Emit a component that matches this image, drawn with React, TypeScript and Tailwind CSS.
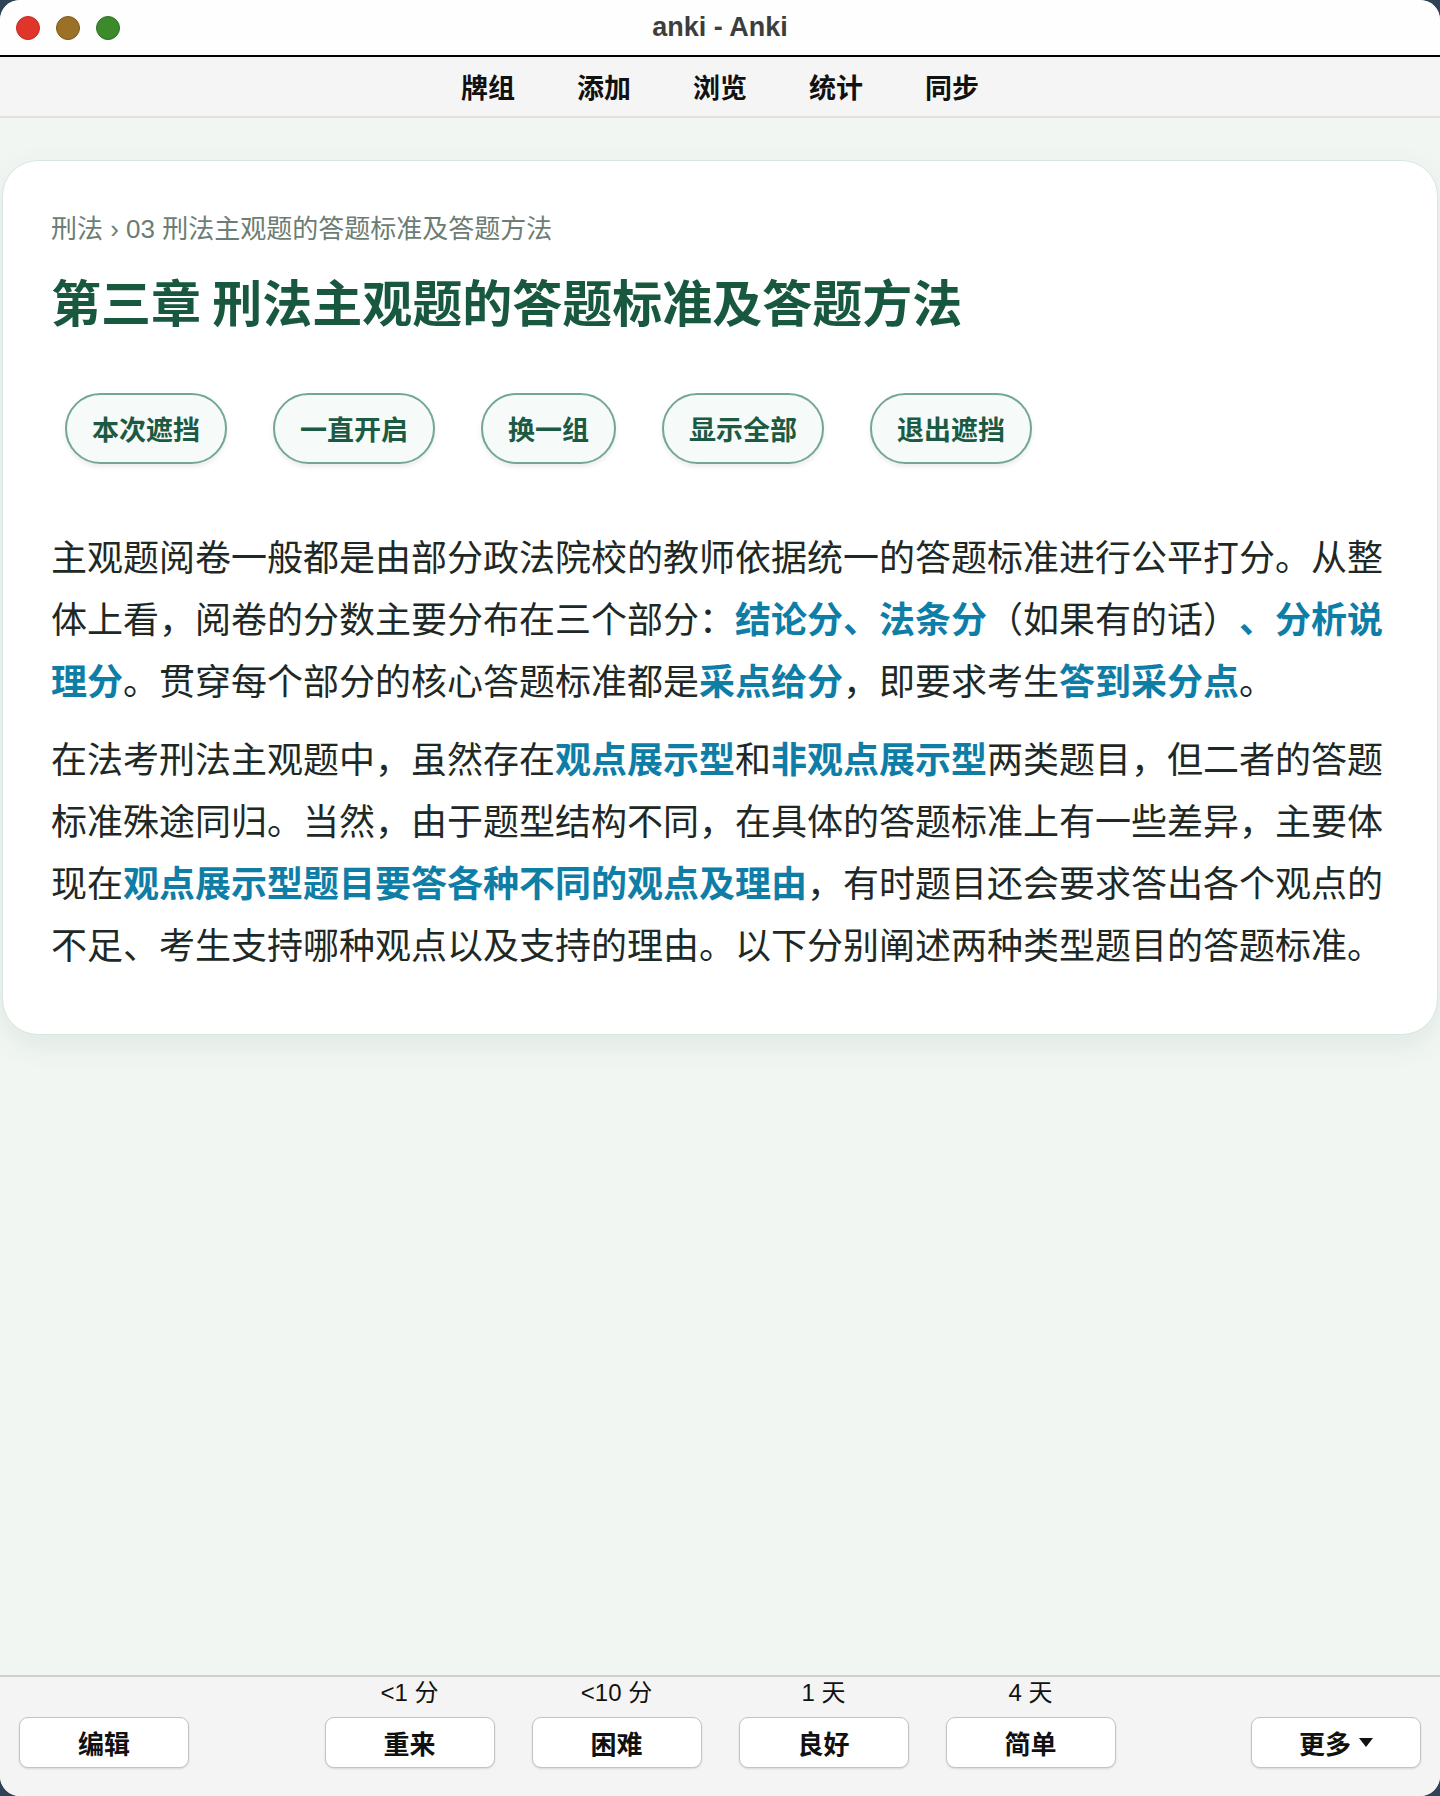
import React from "react";

const CJK = { fontFamily: '"Noto Sans CJK SC", "Noto Sans", sans-serif' };
const UI = { fontFamily: '"Liberation Sans", "Noto Sans CJK SC", sans-serif' };

function B({ children }: { children: React.ReactNode }) {
  return <span className="font-bold text-[#0f7ea7]">{children}</span>;
}

function Pill({ label }: { label: string }) {
  return (
    <button className="h-[71px] px-[25px] rounded-full border-2 border-[#73a790] bg-[#f6fbf9] text-[27px] font-bold text-[#1c5a43] leading-none shadow-[0_3px_5px_rgba(0,0,0,0.08)]">
      {label}
    </button>
  );
}

function BarButton({ children }: { children: React.ReactNode }) {
  return (
    <button className="w-[170px] h-[51px] bg-white border border-[#c3c3c3] rounded-[9px] shadow-[0_1px_2px_rgba(0,0,0,0.12)] text-[26px] font-bold text-[#111] flex items-center justify-center gap-[8px] leading-none">
      {children}
    </button>
  );
}

function Answer({ label, text }: { label: string; text: string }) {
  return (
    <div className="flex flex-col items-center">
      <div className="h-[30px] text-[24px] leading-[30px] text-[#111]" style={UI}>
        {label}
      </div>
      <div className="mt-[9px]">
        <BarButton>{text}</BarButton>
      </div>
    </div>
  );
}

export default function App() {
  return (
    <div className="w-[1440px] h-[1796px] bg-[#2f4257]" style={CJK}>
      <div className="w-full h-full rounded-[20px] overflow-hidden flex flex-col bg-[#f1f6f3]">
        {/* Title bar */}
        <div className="relative h-[55px] bg-[#fefefe] flex items-center justify-center shrink-0">
          <div className="absolute left-[16px] top-[16px] flex gap-[16px]">
            <span className="w-[24px] h-[24px] rounded-full bg-[#e0352b] border border-[#c22a20]" />
            <span className="w-[24px] h-[24px] rounded-full bg-[#9b7128] border border-[#7d5a1c]" />
            <span className="w-[24px] h-[24px] rounded-full bg-[#3b8a2b] border border-[#2e6f21]" />
          </div>
          <span className="text-[27px] font-bold text-[#3d3d3d]" style={UI}>
            anki - Anki
          </span>
        </div>
        <div className="h-[2px] bg-black shrink-0" />
        {/* Toolbar */}
        <div className="h-[61px] bg-[#f5f5f5] border-b-2 border-[#e2e2e2] flex items-center justify-center shrink-0">
          {["牌组", "添加", "浏览", "统计", "同步"].map((t) => (
            <div key={t} className="w-[116px] text-center text-[27px] font-bold text-[#111] leading-none">
              {t}
            </div>
          ))}
        </div>

        {/* Main */}
        <div className="flex-1 px-[2px] pt-[42px]">
          <div className="bg-white rounded-[36px] border border-[#d6e7de] shadow-[0_10px_30px_rgba(30,80,55,0.08)] px-[48px] pt-[48px] pb-[60px] [text-spacing-trim:space-all]">
            <div className="text-[26px] leading-[40px] text-[#6b7d74]" style={UI}>
              刑法 › 03 刑法主观题的答题标准及答题方法
            </div>
            <h1 className="mt-[19px] text-[50px] leading-[64px] font-bold text-[#17583f]">
              第三章 刑法主观题的答题标准及答题方法
            </h1>
            <div className="mt-[61px] ml-[14px] flex gap-[46px]">
              <Pill label="本次遮挡" />
              <Pill label="一直开启" />
              <Pill label="换一组" />
              <Pill label="显示全部" />
              <Pill label="退出遮挡" />
            </div>
            <p className="mt-[60px] text-[36px] leading-[62px] text-[#1e2925]">
              主观题阅卷一般都是由部分政法院校的教师依据统一的答题标准进行公平打分。从整体上看，阅卷的分数主要分布在三个部分：
              <B>结论分、法条分</B>（如果有的话）<B>、分析说理分</B>。贯穿每个部分的核心答题标准都是<B>采点给分</B>，即要求考生<B>答到采分点</B>。
            </p>
            <p className="mt-[16px] text-[36px] leading-[62px] text-[#1e2925]">
              在法考刑法主观题中，虽然存在<B>观点展示型</B>和<B>非观点展示型</B>两类题目，但二者的答题标准殊途同归。当然，由于题型结构不同，在具体的答题标准上有一些差异，主要体现在<B>观点展示型题目要答各种不同的观点及理由</B>，有时题目还会要求答出各个观点的不足、考生支持哪种观点以及支持的理由。以下分别阐述两种类型题目的答题标准。
            </p>
          </div>
        </div>

        {/* Bottom bar */}
        <div className="h-[121px] shrink-0 bg-[#f4f4f4] border-t-2 border-[#cecece] px-[19px] pt-[1px] grid grid-cols-[1fr_auto_1fr]">
          <div className="flex items-start pt-[39px]">
            <BarButton>编辑</BarButton>
          </div>
          <div className="flex gap-[37px]">
            <Answer label="<1 分" text="重来" />
            <Answer label="<10 分" text="困难" />
            <Answer label="1 天" text="良好" />
            <Answer label="4 天" text="简单" />
          </div>
          <div className="flex items-start justify-end pt-[39px]">
            <BarButton>
              <span>更多</span>
              <svg width="14" height="9" viewBox="0 0 14 9">
                <path d="M0 0 L14 0 L7 9 Z" fill="#111" />
              </svg>
            </BarButton>
          </div>
        </div>
      </div>
    </div>
  );
}
